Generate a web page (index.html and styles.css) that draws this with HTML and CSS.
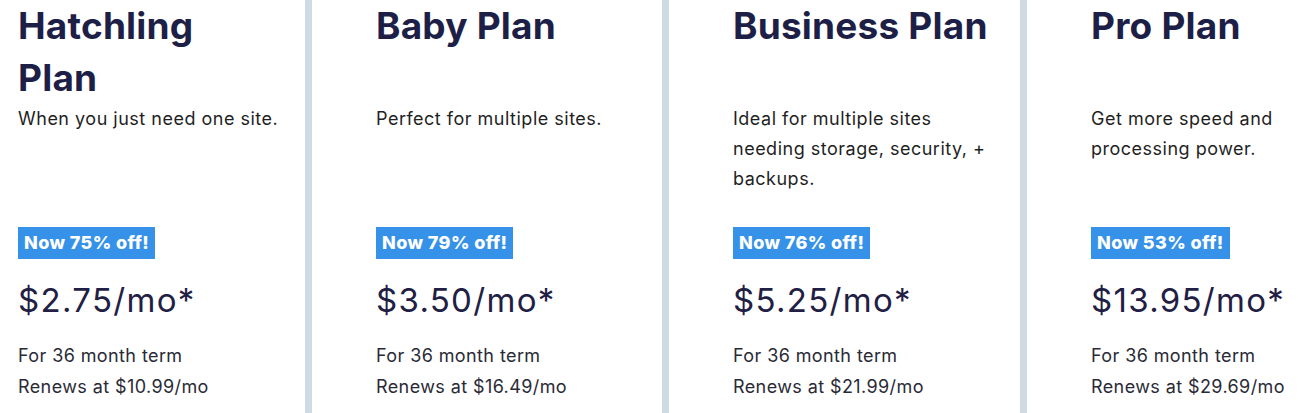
FILE: index.html
```html
<!DOCTYPE html>
<html lang="en">
<head>
<meta charset="utf-8">
<title>Plans</title>
<link rel="stylesheet" href="styles.css">
</head>
<body>
<div class="plans">
  <div class="plan plan-first">
    <h2 class="plan-title">Hatchling Plan</h2>
    <p class="plan-desc">When you just need one site.</p>
    <span class="badge">Now 75% off!</span>
    <div class="price">$2.75/mo*</div>
    <p class="term">For 36 month term</p>
    <p class="term">Renews at $10.99/mo</p>
  </div>
  <div class="plan">
    <h2 class="plan-title">Baby Plan</h2>
    <p class="plan-desc">Perfect for multiple sites.</p>
    <span class="badge">Now 79% off!</span>
    <div class="price">$3.50/mo*</div>
    <p class="term">For 36 month term</p>
    <p class="term">Renews at $16.49/mo</p>
  </div>
  <div class="plan">
    <h2 class="plan-title">Business Plan</h2>
    <p class="plan-desc">Ideal for multiple sites needing storage, security, + backups.</p>
    <span class="badge">Now 76% off!</span>
    <div class="price">$5.25/mo*</div>
    <p class="term">For 36 month term</p>
    <p class="term">Renews at $21.99/mo</p>
  </div>
  <div class="plan">
    <h2 class="plan-title">Pro Plan</h2>
    <p class="plan-desc">Get more speed and processing power.</p>
    <span class="badge">Now 53% off!</span>
    <div class="price">$13.95/mo*</div>
    <p class="term">For 36 month term</p>
    <p class="term">Renews at $29.69/mo</p>
  </div>
</div>
</body>
</html>
```

FILE: styles.css
```css
html, body {
  margin: 0;
  padding: 0;
  background: #ffffff;
}
body {
  font-family: Inter, "Liberation Sans", sans-serif;
  color: #1f1f2b;
  overflow: hidden;
}
.plans {
  display: grid;
  grid-template-columns: 305px 357px 358px 1fr;
  height: 413px;
}
.plan {
  display: flex;
  flex-direction: column;
  align-items: flex-start;
  border-left: 7px solid #cfdae2;
  padding-left: 64px;
  padding-right: 10px;
}
.plan-first {
  border-left: 0;
  padding-left: 18px;
}
.plan-title {
  margin: 0;
  min-height: 104px;
  max-width: 256px;
  font-size: 37px;
  line-height: 52px;
  font-weight: 700;
  letter-spacing: 0.2px;
  color: #1e1f47;
}
.plan-desc {
  margin: 0;
  min-height: 90px;
  max-width: 262px;
  font-size: 18px;
  line-height: 30px;
  letter-spacing: 0.5px;
  color: #1f1f1f;
}
.badge {
  margin-top: 33px;
  background: #3592e8;
  color: #ffffff;
  font-weight: 800;
  font-size: 18px;
  letter-spacing: 0.4px;
  line-height: 32px;
  height: 32px;
  padding: 0 6px;
}
.price {
  margin-top: 21px;
  font-size: 33px;
  line-height: 40px;
  font-weight: 400;
  letter-spacing: 1.3px;
  color: #1f2044;
}
.term {
  margin: 0;
  font-size: 18px;
  line-height: 31px;
  letter-spacing: 0.4px;
  color: #2a2a36;
}
.price + .term {
  margin-top: 20px;
}
```
